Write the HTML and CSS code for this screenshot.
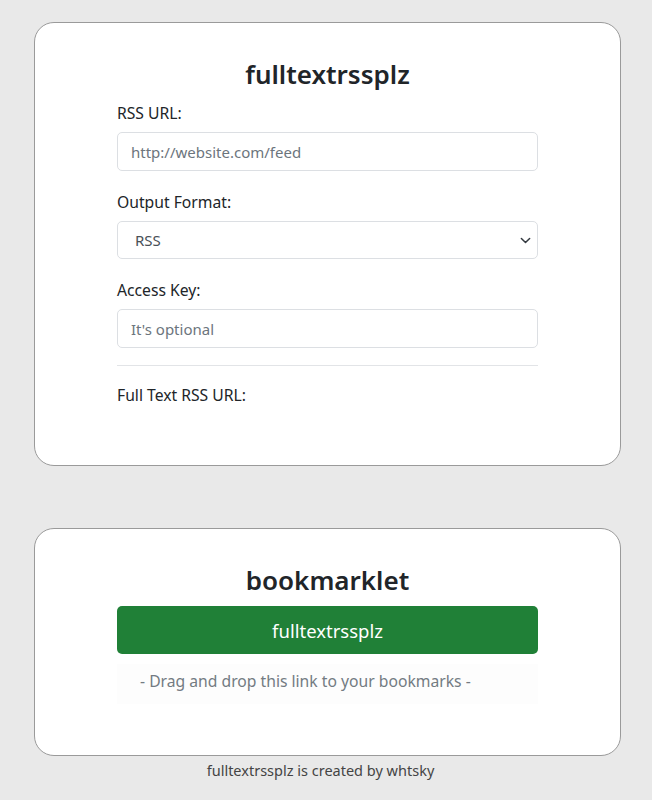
FILE: index.html
```html
<!DOCTYPE html>
<html>
<head>
<meta charset="utf-8">
<link rel="stylesheet" href="styles.css">
</head>
<body>
<main class="page">
  <section class="card card-form">
    <h1 class="title">fulltextrssplz</h1>
    <label class="label">RSS URL:</label>
    <input class="field" type="text" placeholder="http://website.com/feed">
    <label class="label">Output Format:</label>
    <div class="select">
      <span class="select-value">RSS</span>
      <svg class="chevron" width="11" height="11" viewBox="0 0 16 16"><path d="M2 5l6 6 6-6" fill="none" stroke="#343a40" stroke-width="2.2" stroke-linecap="round" stroke-linejoin="round"/></svg>
    </div>
    <label class="label">Access Key:</label>
    <input class="field" type="text" placeholder="It's optional">
    <hr class="divider">
    <label class="label result">Full Text RSS URL:</label>
  </section>
  <section class="card card-book">
    <h1 class="title">bookmarklet</h1>
    <a class="btn" href="#">fulltextrssplz</a>
    <p class="hint">- Drag and drop this link to your bookmarks -</p>
  </section>
  <footer class="footer">fulltextrssplz is created by whtsky</footer>
</main>
</body>
</html>
```
FILE: styles.css
```css
* { box-sizing: border-box; }
html, body { margin: 0; padding: 0; }
body {
  background: #e9e9e9;
  font-family: "Noto Sans", "Open Sans", sans-serif;
  color: #212529;
}
.page {
  width: 587px;
  margin: 0 0 0 34px;
  padding-top: 22px;
  display: flex;
  flex-direction: column;
}
.card {
  background: #fff;
  border: 1px solid #9a9a9a;
  border-radius: 20px;
  padding: 34px 82px 0;
  display: flex;
  flex-direction: column;
}
.card-form { height: 444px; }
.card-book { margin-top: 62px; height: 228px; }
.title {
  margin: 0;
  font-size: 26px;
  line-height: 34px;
  font-weight: 600;
  text-align: center;
  color: #212529;
}
.label {
  display: block;
  font-size: 15.7px;
  line-height: 22px;
  margin-top: 20px;
  margin-bottom: 8px;
  color: #212529;
}
.title + .label { margin-top: 11px; }
.field, .select {
  width: 100%;
  height: 39px;
  border: 1px solid #dcdfe3;
  border-radius: 5px;
  padding: 0 13px;
  font-family: inherit;
  font-size: 15px;
  color: #212529;
  background: #fff;
  outline: none;
}
.field::placeholder { color: #6c757d; }
.select {
  display: flex;
  align-items: center;
  justify-content: space-between;
  padding: 0 6px 0 17px;
  height: 38px;
}
.select-value { color: #495057; }
.divider {
  border: 0;
  border-top: 1px solid #e2e4e7;
  margin: 17px 0 0;
}
.result { margin-top: 18px; }
.btn {
  margin-top: 9px;
  height: 48px;
  background: #208037;
  color: #fff;
  border-radius: 5px;
  display: flex;
  align-items: center;
  justify-content: center;
  font-size: 18.5px;
  text-decoration: none;
}
.hint {
  margin: 10px 0 0;
  height: 40px;
  background: #fdfdfd;
  color: #737b82;
  font-size: 15.7px;
  line-height: 22px;
  padding: 6px 0 0 23px;
}
.footer {
  text-align: center;
  font-size: 14.5px;
  line-height: 20px;
  margin-top: 4px;
  padding-right: 14px;
  color: #444;
}
```
